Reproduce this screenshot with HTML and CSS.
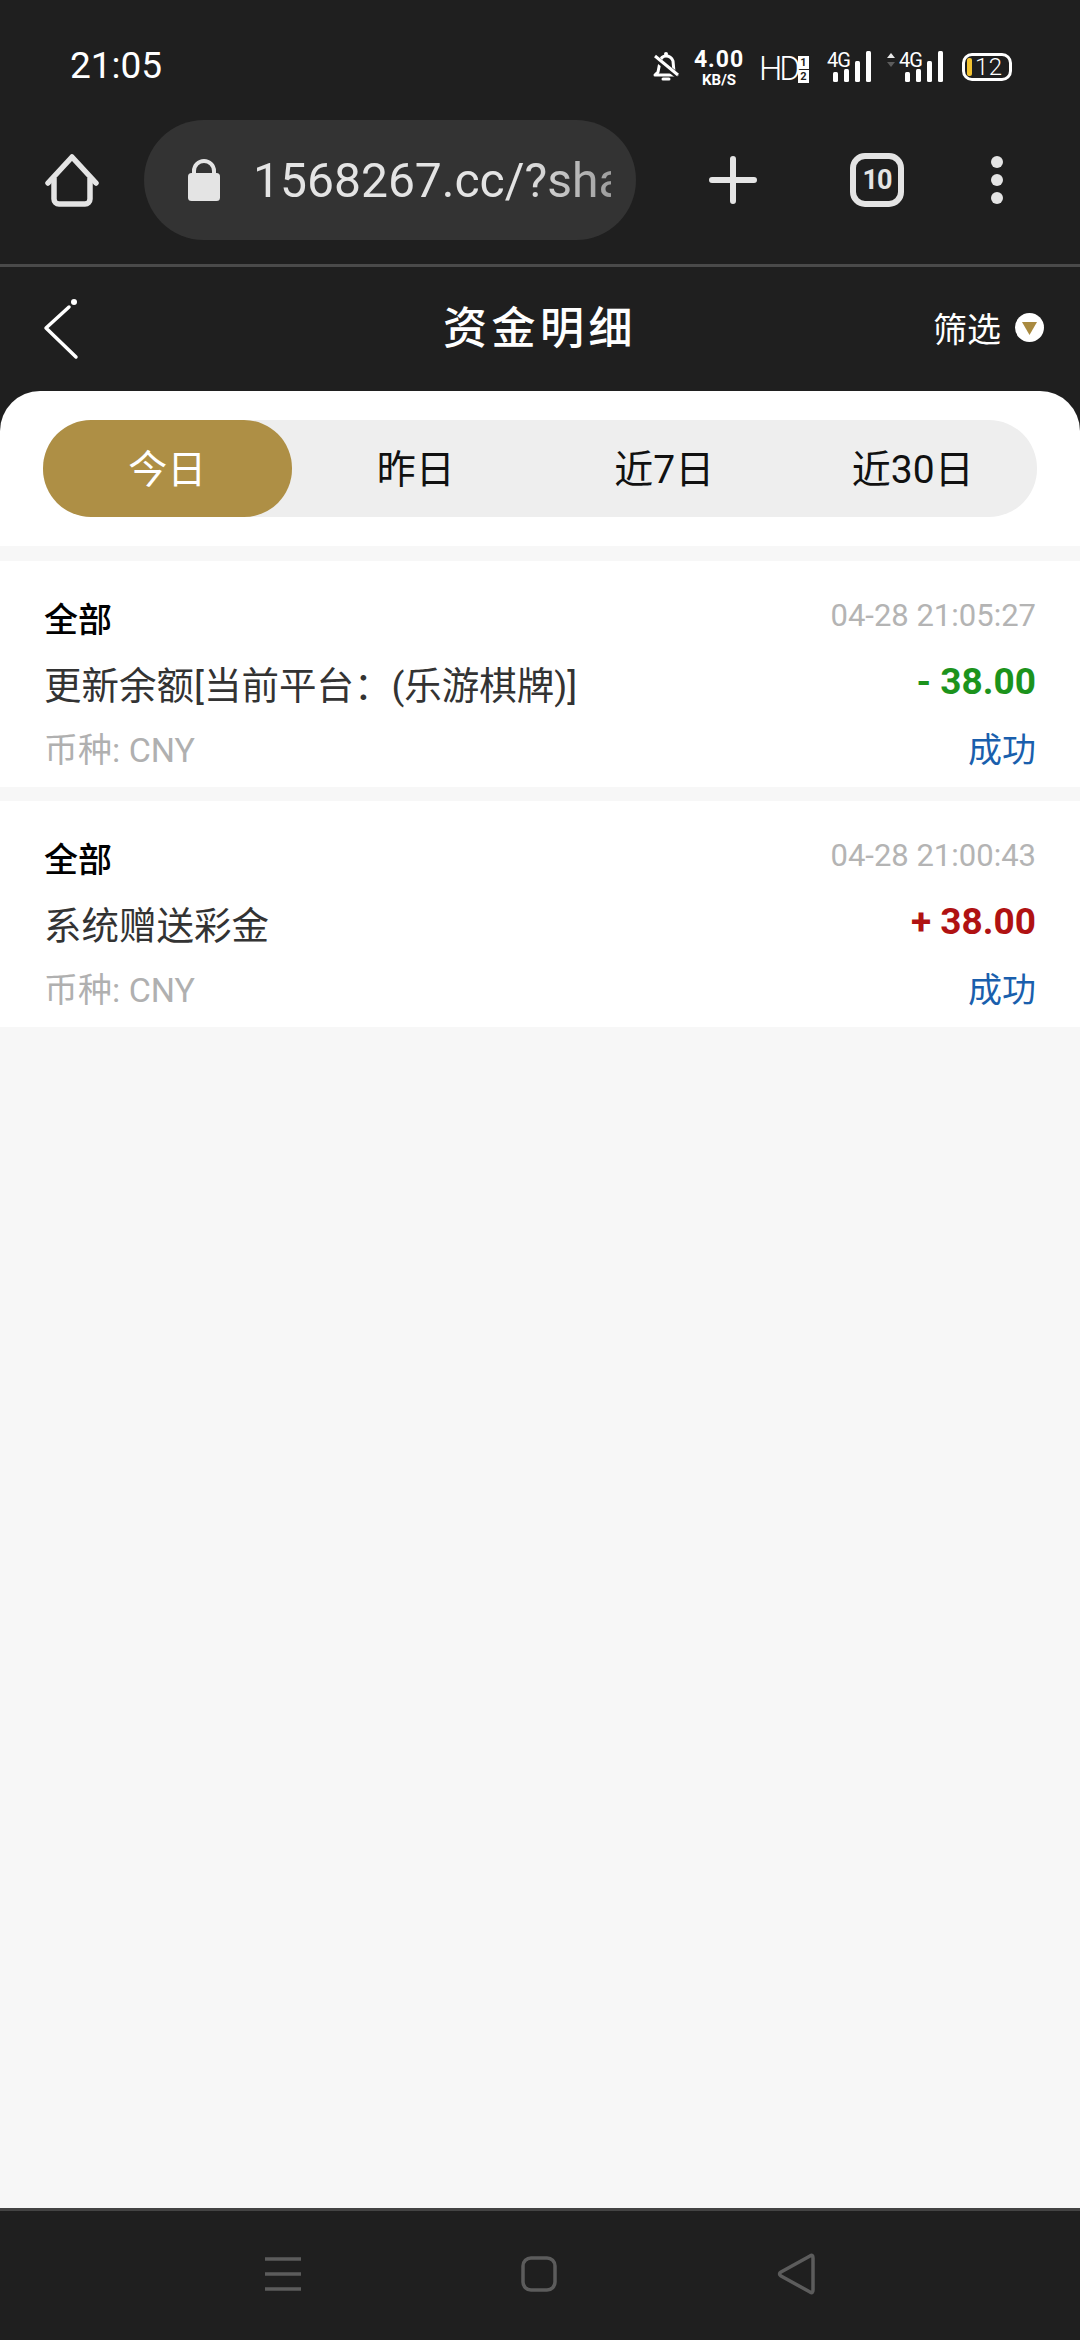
FILE: index.html
```html
<!DOCTYPE html>
<html lang="zh-CN">
<head>
 <meta charset="UTF-8">
 <meta name="viewport" content="width=device-width, initial-scale=1.0">
 <title>资金明细</title>
 <link rel="stylesheet" href="styles.css">
</head>
<body>
<div class="phone">

 <!-- status bar -->
 <div class="statusbar">
  <span class="clock">21:05</span>
  <div class="status-icons">
   <svg class="bell" width="26" height="31" viewBox="0 0 26 31">
    <path d="M5 21 L7 11 Q8 5 13 5 Q18 5 20 10 L21 21 L24 24 H2 Z" fill="none" stroke="#fff" stroke-width="3" stroke-linejoin="round"/>
    <path d="M1 6 L25 25" stroke="#1f1f1f" stroke-width="6"/>
    <path d="M2 5 L25 24" stroke="#fff" stroke-width="3"/>
    <circle cx="13" cy="3" r="2" fill="#fff"/>
    <path d="M10 28 H16" stroke="#fff" stroke-width="3" stroke-linecap="round"/>
   </svg>
   <div class="speed"><b>4.00</b><i>KB/S</i></div>
   <span class="hd">HD</span>
   <div class="sim"><span>1</span><span>2</span></div>
   <div class="signal">
    <span class="lte">4G</span>
    <svg width="38" height="31" viewBox="0 0 38 31">
     <rect x="0" y="21" width="5" height="10" rx="1.5" fill="#fff"/>
     <rect x="11" y="18" width="5" height="13" rx="1.5" fill="#fff"/>
     <rect x="22" y="10" width="5" height="21" rx="1.5" fill="#fff"/>
     <rect x="33" y="0" width="5" height="31" rx="1.5" fill="#fff"/>
    </svg>
   </div>
   <div class="signal second">
    <svg class="updown" width="10" height="16" viewBox="0 0 10 16">
     <path d="M1 6 L5 1 L9 6 Z" fill="#e8e8e8"/>
     <path d="M1 10 L5 15 L9 10 Z" fill="#5c5c5c"/>
    </svg>
    <span class="lte">4G</span>
    <svg width="38" height="31" viewBox="0 0 38 31">
     <rect x="0" y="21" width="5" height="10" rx="1.5" fill="#fff"/>
     <rect x="11" y="18" width="5" height="13" rx="1.5" fill="#fff"/>
     <rect x="22" y="10" width="5" height="21" rx="1.5" fill="#fff"/>
     <rect x="33" y="0" width="5" height="31" rx="1.5" fill="#fff"/>
    </svg>
   </div>
   <div class="battery"><span class="level"></span><span class="percent">12</span></div>
  </div>
 </div>

 <!-- browser toolbar -->
 <div class="toolbar">
  <svg class="home" width="54" height="54" viewBox="0 0 54 54">
   <path d="M3 30 L27 4 L51 30" fill="none" stroke="#e4e4e4" stroke-width="5.5" stroke-linecap="round" stroke-linejoin="round"/>
   <path d="M9 25 V46 a5 5 0 0 0 5 5 H40 a5 5 0 0 0 5 -5 V25" fill="none" stroke="#e4e4e4" stroke-width="5.5"/>
  </svg>
  <div class="address">
   <svg width="32" height="42" viewBox="0 0 32 42">
    <path d="M6 16 V12 a10 10 0 0 1 20 0 V16" fill="none" stroke="#e4e4e4" stroke-width="4"/>
    <rect x="0" y="14" width="32" height="28" rx="3.5" fill="#e4e4e4"/>
   </svg>
   <span class="url">1568267.cc/?sha</span>
  </div>
  <svg class="plus" width="48" height="48" viewBox="0 0 48 48">
   <path d="M24 3 V45 M3 24 H45" stroke="#e4e4e4" stroke-width="6" stroke-linecap="round"/>
  </svg>
  <div class="tabcount">10</div>
  <div class="dots"><span></span><span></span><span></span></div>
 </div>

 <!-- page header -->
 <div class="pagehead">
  <svg class="back" width="40" height="62" viewBox="0 0 40 62">
   <path d="M26 9 L3 30 L33 59" fill="none" stroke="#fff" stroke-width="3.5" stroke-linecap="round" stroke-linejoin="round"/>
   <circle cx="31" cy="4" r="3" fill="#fff"/>
  </svg>
  <h1 class="pagetitle">资金明细</h1>
  <div class="filter">
   <span>筛选</span>
   <div class="filter-dot"><i></i></div>
  </div>
 </div>

 <!-- date tabs -->
 <div class="tabs-panel">
  <div class="tabs">
   <div class="tab active">今日</div>
   <div class="tab">昨日</div>
   <div class="tab">近7日</div>
   <div class="tab">近30日</div>
  </div>
 </div>

 <!-- records -->
 <div class="records">
  <div class="record">
   <div class="line">
    <span class="kind">全部</span>
    <span class="time">04-28 21:05:27</span>
   </div>
   <div class="line">
    <span class="desc">更新余额[当前平台<span class="colon">：</span>(乐游棋牌)]</span>
    <span class="amount minus">- 38.00</span>
   </div>
   <div class="line">
    <span class="currency">币种: CNY</span>
    <span class="state">成功</span>
   </div>
  </div>
  <div class="record">
   <div class="line">
    <span class="kind">全部</span>
    <span class="time">04-28 21:00:43</span>
   </div>
   <div class="line">
    <span class="desc">系统赠送彩金</span>
    <span class="amount plusval">+ 38.00</span>
   </div>
   <div class="line">
    <span class="currency">币种: CNY</span>
    <span class="state">成功</span>
   </div>
  </div>
 </div>

 <!-- system navigation -->
 <div class="navbar">
  <svg width="36" height="34" viewBox="0 0 36 34">
   <path d="M0 2 H36 M0 17 H36 M0 32 H36" stroke="#5c5c5c" stroke-width="3.5"/>
  </svg>
  <svg width="36" height="36" viewBox="0 0 36 36">
   <rect x="2" y="2" width="32" height="32" rx="8" fill="none" stroke="#5c5c5c" stroke-width="3.5"/>
  </svg>
  <svg width="38" height="42" viewBox="0 0 38 42">
   <path d="M33 3 Q36 1 36 5 V37 Q36 41 33 39 L4 23 Q1 21 4 19 Z" fill="none" stroke="#5c5c5c" stroke-width="3.5" stroke-linejoin="round"/>
  </svg>
 </div>

</div>
</body>
</html>
```

FILE: styles.css
```css
* {
 box-sizing: border-box;
}

html,
body {
 margin: 0;
 padding: 0;
}

body {
 font-family: Roboto, "Noto Sans CJK SC", sans-serif;
 background: #1f1f1f;
}

.phone {
 width: 1080px;
 height: 2340px;
 display: flex;
 flex-direction: column;
 background: #1f1f1f;
 overflow: hidden;
}

/* Status bar */
.statusbar {
 height: 120px;
 display: flex;
 justify-content: space-between;
 align-items: flex-start;
 padding: 45px 68px 0 70px;
 color: #fff;
}

.clock {
 font-size: 37px;
 line-height: 42px;
}

.status-icons {
 display: flex;
 align-items: flex-start;
 padding-top: 4px;
}

.bell {
 margin: 2px 15px 0 0;
}

.speed {
 width: 50px;
 margin-right: 15px;
 display: flex;
 flex-direction: column;
 align-items: center;
}

.speed b {
 font-size: 23px;
 line-height: 21px;
 font-weight: 700;
 letter-spacing: 1px;
}

.speed i {
 font-style: normal;
 font-weight: 700;
 font-size: 15px;
 line-height: 14px;
 margin-top: 3px;
}

.hd {
 width: 38px;
 font-size: 33px;
 font-weight: 300;
 line-height: 38px;
 letter-spacing: -3px;
 margin: 1px 1px 0 0;
}

.sim {
 width: 11px;
 margin-top: 7px;
 display: flex;
 flex-direction: column;
 gap: 1px;
}

.sim span {
 height: 13px;
 background: #fff;
 color: #1f1f1f;
 font-size: 11px;
 font-weight: 700;
 line-height: 13px;
 text-align: center;
}

.signal {
 display: flex;
 align-items: flex-start;
 margin: 2px 0 0 18px;
}

.signal svg:last-child {
 margin-left: -16px;
}

.signal .lte {
 font-size: 20px;
 line-height: 18px;
 width: 22px;
 letter-spacing: -1px;
}

.signal.second {
 margin-left: 15px;
}

.signal .updown {
 margin: 1px 3px 0 0;
}

.battery {
 width: 50px;
 height: 28px;
 margin: 4px 0 0 19px;
 border: 3px solid #fff;
 border-radius: 10px;
 display: flex;
 align-items: center;
 padding-left: 2px;
}

.level {
 width: 5px;
 height: 18px;
 background: #f2c230;
 border-radius: 2px;
}

.percent {
 font-size: 24px;
 font-weight: 300;
 line-height: 22px;
 margin-left: 3px;
 letter-spacing: 0.5px;
}

/* Browser toolbar */
.toolbar {
 height: 147px;
 display: flex;
 align-items: flex-start;
 border-bottom: 3px solid #4a4a4a;
 padding-left: 45px;
}

.home {
 margin-top: 33px;
}

.address {
 width: 492px;
 height: 120px;
 margin-left: 45px;
 border-radius: 60px;
 background: #333;
 display: flex;
 align-items: center;
 padding-left: 44px;
 color: #e4e4e4;
}

.url {
 width: 358px;
 margin-left: 33px;
 font-size: 48px;
 white-space: nowrap;
 overflow: hidden;
 -webkit-mask-image: linear-gradient(to right, #000 75%, rgba(0, 0, 0, 0.6));
 mask-image: linear-gradient(to right, #000 75%, rgba(0, 0, 0, 0.6));
}

.plus {
 margin: 36px 0 0 73px;
}

.tabcount {
 width: 54px;
 height: 54px;
 margin: 33px 0 0 93px;
 border: 6px solid #e4e4e4;
 border-radius: 15px;
 color: #e4e4e4;
 font-size: 27px;
 font-weight: 700;
 line-height: 42px;
 text-align: center;
 letter-spacing: -1px;
}

.dots {
 margin: 36px 0 0 87px;
 display: flex;
 flex-direction: column;
 gap: 6px;
}

.dots span {
 width: 12px;
 height: 12px;
 border-radius: 50%;
 background: #e4e4e4;
}

/* Page header */
.pagehead {
 height: 124px;
 display: flex;
 align-items: center;
 position: relative;
 padding: 0 36px 0 43px;
 color: #fff;
}

.pagetitle {
 position: absolute;
 left: 443px;
 top: 34px;
 margin: 0;
 font-size: 44px;
 font-weight: 500;
 line-height: 56px;
 letter-spacing: 4.5px;
 white-space: nowrap;
}

.filter {
 margin-left: auto;
 display: flex;
 align-items: center;
 gap: 14px;
 font-size: 34px;
 margin-top: -3px;
}

.filter-dot {
 width: 29px;
 height: 29px;
 border-radius: 50%;
 background: #fff;
 display: flex;
 align-items: center;
 justify-content: center;
}

.filter-dot i {
 width: 15px;
 height: 13px;
 margin-top: 2px;
 background: #a98a40;
 clip-path: polygon(0 0, 100% 0, 50% 100%);
}

/* Date tabs */
.tabs-panel {
 height: 155px;
 background: #fff;
 border-radius: 40px 40px 0 0;
 padding: 29px 43px 0;
}

.tabs {
 height: 97px;
 display: grid;
 grid-template-columns: repeat(4, 1fr);
 background: #eee;
 border-radius: 48px;
}

.tab {
 display: flex;
 align-items: center;
 justify-content: center;
 padding-bottom: 5px;
 color: #111;
 font-size: 39px;
 border-radius: 48px;
}

.tab.active {
 background: #ae8f45;
 color: #fff;
}

/* Records */
.records {
 flex: 1;
 background: #f7f7f7;
 padding-top: 15px;
 display: flex;
 flex-direction: column;
 gap: 14px;
}

.record {
 height: 226px;
 background: #fff;
 padding: 34px 44px 0;
 display: flex;
 flex-direction: column;
 gap: 21px;
}

.line {
 height: 44px;
 display: flex;
 justify-content: space-between;
 align-items: center;
 white-space: nowrap;
}

.kind {
 color: #000;
 font-size: 34px;
 font-weight: 500;
}

.time {
 color: #b4b4b4;
 font-size: 31px;
 margin-top: -4px;
}

.desc {
 color: #333;
 font-size: 37.5px;
}

.colon {
 font-family: "Noto Sans CJK TC", sans-serif;
}

.amount {
 font-size: 37px;
 font-weight: 700;
 margin-top: -1px;
}

.minus {
 color: #1c931c;
}

.plusval {
 color: #b01212;
}

.currency {
 color: #b0b0b0;
 font-size: 34px;
}

.state {
 color: #1a5fad;
 font-size: 34px;
}

/* System navigation */
.navbar {
 height: 132px;
 border-top: 3px solid #444;
 display: flex;
 align-items: center;
 justify-content: center;
 gap: 220px;
 padding: 0 0 4px 0;
}
```
